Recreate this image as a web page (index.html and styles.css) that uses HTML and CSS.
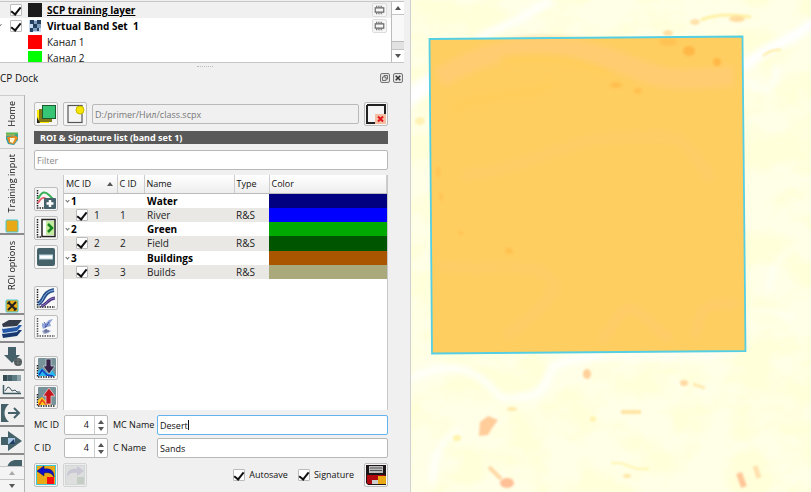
FILE: index.html
```html
<!DOCTYPE html>
<html lang="en">
<head>
<meta charset="utf-8">
<title>SCP Dock</title>
<link rel="stylesheet" href="styles.css">
</head>
<body>
<div class="app">
  <div class="side">
    <section class="layers" aria-label="Layers">
      <ul class="layer-list">
        <li class="layer layer-current">
          <span class="arrow"></span>
          <input type="checkbox" class="check" id="l1" checked>
          <svg class="sw" viewBox="0 0 14 14"><rect width="14" height="14" fill="#1b1b1b"/></svg>
          <label for="l1" class="lname bold under">SCP training layer</label>
          <button class="mem" aria-label="Memory layer"><svg viewBox="0 0 14 14"><path d="M2 4.500h10v5H2z" fill="none" stroke="#666" stroke-width="1.300"/><path d="M3.500 2v2M5.500 2v2M7.500 2v2M9.500 2v2M3.500 10v2M5.500 10v2M7.500 10v2M9.500 10v2" stroke="#666"/></svg></button>
        </li>
        <li class="layer">
          <span class="arrow"><svg viewBox="0 0 10 10"><path d="M0 5l1.500-2" stroke="#777" fill="none"/></svg></span>
          <input type="checkbox" class="check" id="l2" checked>
          <svg class="sw" viewBox="0 0 14 14"><rect x="1" y="1" width="12" height="12" fill="#c6d9ee"/><path d="M2 1h4v4H2zM9 1h4v4H9zM5 5h4v4H5zM2 9h3v4H2zM9 9h2v3H9z" fill="#24415f"/><path d="M6 2h3v3H6zM9 5h4v4H9zM5 9h4v3H5z" fill="#7f9dbd"/></svg>
          <label for="l2" class="lname bold">Virtual Band Set&nbsp; 1</label>
          <button class="mem" aria-label="Memory layer"><svg viewBox="0 0 14 14"><path d="M2 4.500h10v5H2z" fill="none" stroke="#666" stroke-width="1.300"/><path d="M3.500 2v2M5.500 2v2M7.500 2v2M9.500 2v2M3.500 10v2M5.500 10v2M7.500 10v2M9.500 10v2" stroke="#666"/></svg></button>
        </li>
        <li class="layer band"><span class="swatch red"></span><span class="lname">Канал 1</span></li>
        <li class="layer band"><span class="swatch lime"></span><span class="lname">Канал 2</span></li>
      </ul>
      <div class="scroll" aria-hidden="true"><span class="up"></span><span class="track"><span class="thumb"></span></span><span class="down"></span></div>
    </section>
    <div class="grip"></div>
    <header class="dock-title">
      <h1>CP Dock</h1>
      <button class="mini" aria-label="Float"><svg viewBox="0 0 10 10"><rect x=".5" y=".5" width="9" height="9" rx="1.500" fill="#e4e4e4" stroke="#777"/><path d="M4 4V2.500h3.500V6H6M2.500 4H6v3.500H2.500z" fill="none" stroke="#555" stroke-width=".8"/></svg></button>
      <button class="mini" aria-label="Close"><svg viewBox="0 0 10 10"><rect x=".5" y=".5" width="9" height="9" rx="1.500" fill="#e4e4e4" stroke="#777"/><path d="M2.700 2.700l4.600 4.600M7.300 2.700L2.700 7.300" stroke="#333" stroke-width="1.500"/></svg></button>
    </header>
    <div class="dock">
      <nav class="tabs">
        <button class="tab tab-home"><svg viewBox="0 0 14 14"><path d="M1 2h12v6l-4 5-6-1-2-5z" fill="#37a09c"/><path d="M2 5l9-1 2 2-4 6-5-1z" fill="#f08a1c"/><path d="M5 6l5 0-2 5-3-1z" fill="#fff4cf"/><path d="M1 1.500h12" stroke="#56bb52" stroke-width="2"/><path d="M1 3h9" stroke="#e9b53a"/></svg><span>Home</span></button>
        <button class="tab tab-training"><svg viewBox="0 0 14 14"><rect x="1" y="1" width="12" height="12" rx="1" fill="#e8a914" stroke="#41c8d8"/></svg><span>Training input</span></button>
        <button class="tab tab-roi"><svg viewBox="0 0 14 14"><rect x="1" y="1" width="12" height="12" rx="1" fill="#e8a914" stroke="#41c8d8"/><path d="M3 3l8 8M11 3l-8 8" stroke="#222" stroke-width="2"/><path d="M2.500 5L5 2.500M9 11.500L11.500 9" stroke="#222" stroke-width="1.500"/></svg><span>ROI options</span></button>
        <button class="tab tab-icon" aria-label="Band set"><svg viewBox="0 0 22 24"><path d="M1 18l7-4h13l-5 6-14 2z" fill="#16386e"/><path d="M1 14l7-4h13l-5 6-14 2z" fill="#cfe0f5"/><path d="M1 13l7-4h13l-5 6-14 2z" fill="#2458a4"/><path d="M1 9l7-4h13l-5 6-14 2z" fill="#e8edf2"/><path d="M1 8l7-4h13l-5 6-14 1z" fill="#333c48"/></svg></button>
        <button class="tab tab-icon" aria-label="Download products"><svg viewBox="0 0 22 24"><path d="M7 3h8v8h4l-8 8-8-8h4z" fill="#45626a"/><circle cx="17" cy="18" r="4" fill="#4c5557"/><path d="M13 16h8M13 19h8M17 14v8" stroke="#7d898c" stroke-width=".6"/></svg></button>
        <button class="tab tab-icon" aria-label="Basic tools"><svg viewBox="0 0 22 24"><rect x="2" y="3" width="18" height="6" fill="#5c7b83"/><path d="M2 3h4v6H2z" fill="#344a50"/><path d="M7 3h4v6H7z" fill="#466067"/><path d="M16 3h4v6h-4z" fill="#8ea4aa"/><path d="M2.500 13v8.500H20" fill="none" stroke="#3f5960" stroke-width="1.500"/><path d="M4 19l3-4 2 1 2 3 3-1 2 2h3" fill="none" stroke="#3f5960"/></svg></button>
        <button class="tab tab-icon" aria-label="Preprocessing"><svg viewBox="0 0 22 24"><path d="M0 4h8c-6 5-6 13 0 18H0z" fill="#45626a"/><path d="M7 13h11M13 8l5 5-5 5" fill="none" stroke="#45626a" stroke-width="2"/></svg></button>
        <button class="tab tab-icon" aria-label="Band processing"><svg viewBox="0 0 22 24"><path d="M0 9h7V3l14 10L7 23v-6H0z" fill="#45626a"/><path d="M7 10h7v6H7z" fill="#a8c8e6"/><path d="M8 16l5-5 1 5z" fill="#1f3d63"/></svg></button>
        <button class="tab tab-icon tab-cut" aria-label="Postprocessing"><svg viewBox="0 0 22 24"><path d="M21 4h-6c-5 0-8 3-9 8h7v9h8z" fill="#45626a"/></svg></button>
        <span class="tab-scroll"><button class="sbtn" aria-label="Scroll up"><i class="up dim"></i></button><button class="sbtn" aria-label="Scroll down"><i class="down"></i></button></span>
      </nav>
      <main class="content">
        <div class="row file-row">
          <button class="tool" aria-label="Open"><svg viewBox="0 0 20 20"><path d="M1 6h12v13H1z" fill="#ffe900"/><path d="M3 5h13v13H3z" fill="#80791a"/><path d="M1 13l3 6H1z" fill="#222"/><rect x="6.500" y="1.500" width="13" height="13" fill="#36c575" stroke="#1c5a2f"/></svg></button>
          <button class="tool" aria-label="New"><svg viewBox="0 0 20 20"><rect x="3" y="1.500" width="14" height="17" fill="#f4f4f4" stroke="#555" stroke-width="1.200"/><circle cx="15" cy="6" r="4" fill="#f6e500" stroke="#c9ba00"/></svg></button>
          <input class="field path" type="text" value="D:/primer/Нил/class.scpx" readonly aria-label="Training file">
          <button class="tool" aria-label="Reset"><svg viewBox="0 0 20 20"><path d="M1 1h18v9M1 1v18h10" fill="#f4f4f4" stroke="#222" stroke-width="2"/><path d="M2 2h16v8h-8v8H2z" fill="#f4f4f4"/><rect x="9" y="10" width="11" height="10" fill="#f3c0a4"/><path d="M12 12.500l5 5M17 12.500l-5 5" stroke="#e3161b" stroke-width="2"/></svg></button>
        </div>
        <h2 class="bar">ROI &amp; Signature list (band set 1)</h2>
        <input class="field filter" type="text" placeholder="Filter" aria-label="Filter">
        <div class="list-area">
          <div class="tools">
            <button class="tool" aria-label="Merge"><svg viewBox="0 0 20 20"><rect width="20" height="20" fill="#f5f5f5"/><path d="M1.500 1v18H18" fill="none" stroke="#222" stroke-width="1.500" stroke-dasharray="1.500 1"/><path d="M2 10c4-8 7-8 11-4l5 5" fill="none" stroke="#3bb058" stroke-width="2"/><path d="M2 14c4-7 7-6 10-2" fill="none" stroke="#ec6170" stroke-width="2"/><rect x="8" y="9" width="12" height="11" rx="1" fill="#45626a"/><path d="M14 11v7M10.500 14.500h7" stroke="#fff" stroke-width="2.500"/></svg></button>
            <button class="tool" aria-label="Import"><svg viewBox="0 0 20 20"><rect width="20" height="20" fill="#f5f5f5"/><path d="M1.500 1v18H6" fill="none" stroke="#222" stroke-width="1.500" stroke-dasharray="1.500 1"/><rect x="6" y="1.500" width="13" height="17" fill="#fff" stroke="#222" stroke-width="1.500"/><path d="M10 3h8v14h-8z" fill="#c3eaa0"/><path d="M12 6l4 4-4 4" fill="none" stroke="#16831d" stroke-width="2.500"/></svg></button>
            <button class="tool" aria-label="Delete"><svg viewBox="0 0 20 20"><rect x="1" y="1" width="18" height="18" rx="2" fill="#45626a"/><rect x="3.500" y="8" width="13" height="4" fill="#fff" stroke="#b9d4de"/></svg></button>
            <button class="tool gap" aria-label="Signature plot"><svg viewBox="0 0 20 20"><rect width="20" height="20" fill="#f8f8f8"/><path d="M1.500 1v18H19" fill="none" stroke="#222" stroke-width="1.500" stroke-dasharray="1.500 1"/><path d="M2 16C9 13 6 4 18 2" fill="none" stroke="#244e8c" stroke-width="4"/><path d="M2 16C9 13 6 4 18 2" fill="none" stroke="#8fb7de" stroke-width="1"/><path d="M5 18c6-1 6-7 14-8" fill="none" stroke="#45317e" stroke-width="3"/><path d="M5 18c6-1 6-7 14-8" fill="none" stroke="#a38bd0" stroke-width=".8"/></svg></button>
            <button class="tool" aria-label="Scatter plot"><svg viewBox="0 0 20 20"><rect width="20" height="20" fill="#f8f8f8"/><path d="M1.500 1v18H19" fill="none" stroke="#555" stroke-width="1.500" stroke-dasharray="1.500 1"/><path d="M6 6l3 1 4-4 4-1-3 4 1 3-4 1-4 2-1-3z" fill="#8fa5d8"/><path d="M8 5l2 3-1 3M13 5l-3 5" stroke="#545eb0" fill="none"/><path d="M6 14l4-2 5 2-3 2-4 1z" fill="#98a4c8"/><path d="M8 14h5M10 12v4" stroke="#5f648c"/></svg></button>
            <button class="tool gap" aria-label="Import library"><svg viewBox="0 0 20 20"><rect x="2" y="0" width="18" height="18" rx="1" fill="#78929a"/><path d="M1.500 7v12H19" fill="none" stroke="#222" stroke-width="1.500" stroke-dasharray="1.500 1"/><path d="M2 18v-5l4-3 5 5 5-3 4 6z" fill="#27b8ee"/><path d="M3 17l3-5 5 5 6 1" fill="none" stroke="#163cc0" stroke-width="1.500"/><path d="M10 1h5v7h4l-6 8-6-8h3z" fill="#38244a" stroke="#cfd8dc" stroke-width=".7"/></svg></button>
            <button class="tool" aria-label="Export library"><svg viewBox="0 0 20 20"><rect x="2" y="0" width="18" height="18" rx="1" fill="#78929a"/><path d="M1.500 7v12H19" fill="none" stroke="#222" stroke-width="1.500" stroke-dasharray="1.500 1"/><path d="M2 18v-5l4-3 5 5 4 3z" fill="#ffc51c"/><path d="M3 18l3-5 5 5" fill="none" stroke="#e4431c" stroke-width="1.500"/><path d="M10 17h5V9h4l-6-8-6 8h3z" fill="#c3151b" stroke="#f0dcdc" stroke-width=".7"/></svg></button>
          </div>
          <div class="table-box">
            <table>
              <colgroup><col class="c-mc"><col class="c-c"><col class="c-name"><col class="c-type"><col></colgroup>
              <thead><tr><th><span class="sorted">MC ID<i class="up"></i></span></th><th>C ID</th><th>Name</th><th>Type</th><th>Color</th></tr></thead>
              <tbody>
                <tr class="group"><td><span class="twist"></span>1</td><td></td><td>Water</td><td></td><td class="navy"></td></tr>
                <tr class="item"><td><span class="cell"><input type="checkbox" class="check" checked aria-label="River"> 1</span></td><td>1</td><td>River</td><td>R&amp;S</td><td class="blue"></td></tr>
                <tr class="group"><td><span class="twist"></span>2</td><td></td><td>Green</td><td></td><td class="green"></td></tr>
                <tr class="item"><td><span class="cell"><input type="checkbox" class="check" checked aria-label="Field"> 2</span></td><td>2</td><td>Field</td><td>R&amp;S</td><td class="forest"></td></tr>
                <tr class="group"><td><span class="twist"></span>3</td><td></td><td>Buildings</td><td></td><td class="brown"></td></tr>
                <tr class="item"><td><span class="cell"><input type="checkbox" class="check" checked aria-label="Builds"> 3</span></td><td>3</td><td>Builds</td><td>R&amp;S</td><td class="khaki"></td></tr>
              </tbody>
            </table>
          </div>
        </div>
        <form class="form">
          <label for="mc">MC ID</label>
          <span class="spin"><input id="mc" type="text" value="4"><span class="steps"><i class="up"></i><i class="down"></i></span></span>
          <label for="mcn">MC Name</label>
          <span class="focus-box"><input class="field focus" id="mcn" type="text" value="Desert"><span class="caret"></span></span>
          <label for="ci">C ID</label>
          <span class="spin"><input id="ci" type="text" value="4"><span class="steps"><i class="up"></i><i class="down"></i></span></span>
          <label for="cn">C Name</label>
          <input class="field" id="cn" type="text" value="Sands">
        </form>
        <div class="row foot">
          <button class="tool" aria-label="Undo"><svg viewBox="0 0 20 20"><rect x=".5" y=".5" width="19" height="19" fill="#e8a914" stroke="#41c8d8"/><path d="M1 6l7-5v3c7-1 10 2 10 8-2-4-5-5-10-4v3z" fill="#0a10c8" stroke="#101050" stroke-width=".5"/><rect x="11" y="12" width="7" height="7" fill="#fb0d0d"/></svg></button>
          <button class="tool off" aria-label="Redo" disabled><svg viewBox="0 0 20 20"><rect x=".5" y=".5" width="19" height="19" fill="#dedede" stroke="#d2d8d8"/><path d="M19 6l-7-5v3C5 3 2 6 2 12c2-4 5-5 10-4v3z" fill="#c9c7d3"/><rect x="12" y="12" width="7" height="7" fill="#c5cdc5"/></svg></button>
          <span class="opts">
            <span class="opt"><input type="checkbox" class="check" id="as" checked><label for="as">Autosave</label></span>
            <span class="opt"><input type="checkbox" class="check" id="sg" checked><label for="sg">Signature</label></span>
            <button class="tool" aria-label="Save ROI"><svg viewBox="0 0 20 20"><path d="M0 0h20v20H2l-2-2z" fill="#1c1517"/><rect x="3" y="1" width="14" height="7" fill="#bbb"/><path d="M4 3h12M4 5.500h12" stroke="#555"/><path d="M1 10h18v9H2l-1-1z" fill="#b0080d"/><path d="M6 15h6v4H6z" fill="#ccc"/><rect x="12" y="11" width="8" height="8" fill="#e8a914"/></svg></button>
          </span>
        </div>
      </main>
    </div>
  </div>
  <div class="map">
    <svg viewBox="0 0 400 492" preserveAspectRatio="xMinYMin slice" role="img" aria-label="Map canvas">
      <defs>
        <filter id="soft" x="-20%" y="-20%" width="140%" height="140%"><feGaussianBlur stdDeviation="3"/></filter>
        <filter id="spot" x="-50%" y="-50%" width="200%" height="200%"><feGaussianBlur stdDeviation="1"/></filter>
        <filter id="sand" x="0" y="0" width="100%" height="100%"><feTurbulence type="fractalNoise" baseFrequency=".022 .03" numOctaves="5" seed="8"/><feColorMatrix values="0 0 0 0 1  0 0 0 0 1  0 0 0 0 .7  3.600 0 0 0 -1.400"/></filter>
      </defs>
      <rect width="400" height="492" fill="#ffffe8"/>
      <rect width="400" height="492" filter="url(#sand)"/>
      <g filter="url(#soft)" fill="none" stroke="#fff" stroke-linecap="round">
        <path d="M-4 100l24-18" stroke-width="16"/>
        <path d="M70 36C95 26 110 18 138 2" stroke-width="7"/>
        <path d="M334 66c18-18 38-20 66-42" stroke-width="11"/>
        <path d="M334 78c8 8 16 14 28 8l4-18" stroke-width="4"/>
        <path d="M0 378c40-18 60-8 74 4s14 18 28 16 30-2 34-18 12-20 52-24" stroke-width="6"/>
        <path d="M188 358c50-4 100-2 136-4" stroke-width="6" opacity=".5"/>
        <path d="M22 480c0-26 8-40 24-48" stroke-width="5"/>
        <path d="M335 312c20-4 36-2 46 8" stroke-width="4" opacity=".7"/>
        <path d="M358 290c2-24 12-36 24-40" stroke-width="4" opacity=".7"/>
      </g>
      <g filter="url(#spot)">
        <path d="M290 20q20-8 50-3" fill="none" stroke="#fff0a4" stroke-width="3"/>
        <ellipse cx="326" cy="19" rx="8" ry="3" fill="#ffdb9e"/><ellipse cx="284" cy="22" rx="5" ry="3" fill="#ffe2aa"/>
        <path d="M352 56q8-7 18-6" fill="none" stroke="#ffeca0" stroke-width="2"/>
        <ellipse cx="257" cy="33" rx="5" ry="3" fill="#ffe0a4"/>
        <ellipse cx="9" cy="121" rx="5" ry="4" fill="#fff2b4"/>
        <ellipse cx="176" cy="374" rx="4" ry="5" fill="#ffd09a"/><ellipse cx="273" cy="383" rx="4" ry="3" fill="#ffd8a0"/><path d="M282 384l12 4" stroke="#ffeab0" stroke-width="3"/>
        <path d="M69 422l8-6 10 4-6 8-4 7-9 1z" fill="#ffcc9a"/><ellipse cx="101" cy="409" rx="5" ry="2" fill="#ffeaac"/>
        <path d="M210 412h20" stroke="#ffe4a4" stroke-width="4"/>
        <path d="M78 467l12 12" stroke="#ffd8a4" stroke-width="4"/><ellipse cx="96" cy="483" rx="7" ry="5" fill="#ffc096"/>
        <path d="M328 473l5 14" stroke="#ffc698" stroke-width="6"/><path d="M344 466l4 12" stroke="#ffe0ae" stroke-width="5"/>
        <ellipse cx="46" cy="438" rx="4" ry="3" fill="#fff3ac"/><ellipse cx="216" cy="476" rx="4" ry="2" fill="#ffe8a8"/>
        <path d="M200 463h10l16 6h12" fill="none" stroke="#fff4b0" stroke-width="2"/><ellipse cx="182" cy="419" rx="3" ry="3" fill="#fff3b0"/>
      </g>
      <path d="M18.500 39L331.500 36.500 334.500 351 21 353.500z" fill="#ffce60"/>
      <g filter="url(#soft)" fill="none">
        <path d="M28 78C60 60 90 46 140 48s74 18 100 26 50 4 82 2" stroke="#ffcc72" stroke-width="20"/>
        <path d="M90 60c50-8 80 0 110 14" stroke="#ffce58" stroke-width="6"/>
        <path d="M50 176c50-6 80-20 110-30s60-10 90-10 30 20 52 44" stroke="#ffcd66" stroke-width="12"/>
        <path d="M28 264c40 10 80-4 106 10s-10 40-40 64" stroke="#ffcd66" stroke-width="12"/>
        <path d="M190 342c16-20 20-40 34-32s20 22 36 28" stroke="#ffcc6a" stroke-width="8"/>
        <path d="M284 338c4-40 20-34 42-34" stroke="#ffcc6a" stroke-width="8"/>
        <path d="M40 110c40-20 70-10 100-26" stroke="#ffcd58" stroke-width="6"/>
      </g>
      <g filter="url(#spot)" fill="#ffb846">
        <ellipse cx="278" cy="51" rx="6" ry="5"/><ellipse cx="306" cy="62" rx="4" ry="4"/><ellipse cx="257" cy="42" rx="9" ry="4" opacity=".5"/><ellipse cx="205" cy="85" rx="6" ry="3" opacity=".6"/><ellipse cx="227" cy="91" rx="4" ry="3" opacity=".6"/><ellipse cx="98" cy="251" rx="4" ry="3" opacity=".6"/><ellipse cx="27" cy="172" rx="2" ry="5" opacity=".5"/><ellipse cx="30" cy="197" rx="2" ry="4" opacity=".4"/><ellipse cx="50" cy="233" rx="2" ry="2" opacity=".5"/>
      </g>
      <path d="M18.500 39L331.500 36.500 334.500 351 21 353.500z" fill="none" stroke="#55cfe4" stroke-width="1.800"/>
    </svg>
  </div>
</div>
</body>
</html>
```
FILE: styles.css
```css
* { box-sizing: border-box; }
body { margin: 0; font: 9px/12px "Open Sans", "Noto Sans", sans-serif; color: #111; background: #f0f0f0; }
button, input { font: inherit; color: inherit; margin: 0; padding: 0; }
button { border: 0; background: none; display: block; }
svg { display: block; }
h1, h2, ul { margin: 0; padding: 0; font-weight: normal; list-style: none; }

.app { display: grid; grid-template-columns: minmax(0, 411fr) minmax(0, 400fr); grid-template-rows: minmax(0, 1fr); height: 100vh; overflow: hidden; }
.side { display: flex; flex-direction: column; min-width: 0; min-height: 0; background: #f0f0f0; border-right: 1px solid #d0d0d0; }

.up, .down { display: block; border: 3px solid transparent; width: 0; height: 0; }
.up { border-top: 0; border-bottom: 4px solid #555; }
.down { border-bottom: 0; border-top: 4px solid #555; }
.dim { border-bottom-color: #aaa; }

.check { appearance: none; flex: none; width: 12px; height: 12px; border: 1px solid #bbb; border-radius: 1px; background: #fff; display: grid; place-items: center; }
.check:checked::before { content: ""; width: 4px; height: 8px; margin-bottom: 2px; border: solid #111; border-width: 0 2px 2px 0; transform: rotate(38deg); }

.layers { display: flex; flex: none; height: 62px; margin-top: 1px; margin-right: 6px; border: solid #c6c6c6; border-width: 1px 0; background: #fff; overflow: hidden; }
.layer-list { flex: 1; }
.layer { display: flex; align-items: center; height: 16px; font-size: 10px; line-height: 16px; padding-right: 4px; }
.layer-current { background: #f0f0f0; }
.arrow { width: 10px; }
.arrow svg { width: 10px; height: 10px; }
.sw { width: 14px; height: 14px; margin: 0 5px 0 6px; }
.band { padding-left: 28px; }
.swatch { width: 14px; height: 14px; margin-right: 5px; }
.red { background: #f00; }
.lime { background: #0f0; }
.lname { flex: 1; white-space: nowrap; }
.bold { font-weight: bold; color: #000; }
.under { text-decoration: underline; }
.mem { border: 1px solid #ddd; border-radius: 2px; background: #f6f6f6; width: 15px; height: 14px; }
.mem svg { height: 12px; width: 13px; }
.scroll { display: flex; flex-direction: column; align-items: center; width: 13px; border-left: 1px solid #bbb; padding: 4px 0; }
.track { display: flex; align-items: flex-end; flex: 1; align-self: stretch; margin: 4px 0; border: solid #c4c4c4; border-width: 1px 0; background: #f8f8f8; }
.thumb { flex: 1; height: 8px; background: #e2e2e2; border-top: 1px solid #bbb; }

.grip { flex: none; width: 16px; height: 4px; margin: 0 auto; border-bottom: 1px dotted #bbb; }
.dock-title { display: flex; flex: none; align-items: center; height: 22px; gap: 3px; padding-right: 7px; margin-bottom: 6px; }
.dock-title h1 { flex: 1; font-size: 10px; line-height: 16px; }
.mini svg { width: 10px; height: 10px; }

.dock { display: flex; flex: 1; min-height: 0; }
.tabs { display: flex; flex-direction: column; flex: none; width: 25px; border-right: 1px solid #b4b4b4; overflow: hidden; }
.tab { display: flex; flex-direction: column-reverse; align-items: center; justify-content: space-between; flex: none; width: 24px; border-bottom: 2px solid #8a8a8a; }
.tab svg { flex: none; width: 14px; height: 14px; }
.tab span { writing-mode: vertical-rl; transform: rotate(180deg); font-size: 9px; line-height: 12px; white-space: nowrap; }
.tab-home { height: 54px; border-top: 1px solid #ccc; border-bottom: 1px solid #ccc; padding: 5px 0 2px; }
.tab-training { height: 86px; padding: 5px 0 0; }
.tab-roi { height: 80px; padding: 6px 0 0; }
.tab-icon { height: 28px; }
.tab-icon svg { width: 22px; height: 24px; margin: 1px 0; }
.tab-cut { flex: 0 1 28px; min-height: 0; overflow: hidden; justify-content: flex-end; border: 0; }
.tab-scroll { flex: none; margin-top: auto; background: #f4f4f4; }
.sbtn { display: grid; place-items: center; width: 24px; height: 13px; border-top: 1px solid #c6c6c6; }

.content { flex: 1; min-width: 0; display: flex; flex-direction: column; padding: 7px 22px 5px 9px; }
.row { display: flex; align-items: center; gap: 5px; flex: none; }
.tool { flex: none; width: 24px; height: 24px; padding: 1px; border: 1px solid #bdbdbd; border-radius: 2px; background: #f6f6f6; }
.tool svg { width: 20px; height: 20px; }
.off { border-color: #d4d4d4; background: #eee; }
.field { width: 100%; height: 20px; border: 1px solid #b9b9b9; border-radius: 2px; background: #fff; padding: 0 2px; outline: 0; }
.path { flex: 1; min-width: 0; background: #f0f0f0; color: #777; }
.bar { flex: none; height: 13px; margin-top: 5px; padding-left: 6px; background: #595959; color: #fff; font: bold 9px/13px "Noto Sans", sans-serif; }
.filter { flex: none; margin-top: 6px; }
.filter::placeholder { color: #888; opacity: 1; }

.list-area { display: flex; flex: 1; gap: 5px; min-height: 0; margin-top: 5px; }
.tools { display: flex; flex-direction: column; gap: 5px; padding-top: 12px; flex: none; }
.gap { margin-top: 12px; }
.table-box { flex: 1; min-width: 0; background: #fff; border: solid #c8c8c8; border-width: 0 1px; }
table { width: 100%; height: 104px; table-layout: fixed; border-collapse: collapse; }
.c-mc { width: 53px; }
.c-c { width: 27px; }
.c-name { width: 90px; }
.c-type { width: 35px; }
th { height: 18px; padding: 0 2px; text-align: left; font-weight: normal; background: linear-gradient(#fff, #ededed); border-right: 1px solid #ccc; border-bottom: 1px solid #bbb; white-space: nowrap; }
.sorted { display: flex; align-items: center; justify-content: space-between; padding-right: 2px; }
td { padding: 0 2px; font-size: 10px; line-height: 12px; white-space: nowrap; }
td:nth-child(3) { padding-left: 3px; }
.group { font-weight: bold; color: #000; }
.item { background: #e9e8e4; color: #222; }
.item td:nth-child(2) { padding-left: 3px; }
.cell { display: flex; align-items: center; gap: 6px; padding-left: 10px; }
.twist { display: inline-block; width: 3px; height: 3px; margin: 0 2px 3px 0; border: solid #666; border-width: 0 1px 1px 0; transform: rotate(45deg); }
.navy { background: #000080; }
.blue { background: #0000ff; }
.green { background: #00aa00; }
.forest { background: #005500; }
.brown { background: #aa5500; }
.khaki { background: #a9a97c; }

.form { display: grid; flex: none; grid-template-columns: 30px 44px 49px minmax(0, 1fr); align-items: center; row-gap: 3px; margin-top: 5px; }
.form label:nth-of-type(even) { padding-left: 5px; }
.spin { display: flex; height: 20px; border: 1px solid #b9b9b9; border-radius: 2px; background: #fff; }
.spin input { flex: 1; min-width: 0; border: 0; background: none; text-align: right; padding-right: 5px; outline: 0; }
.steps { display: flex; flex-direction: column; justify-content: center; gap: 3px; width: 13px; padding-left: 3px; border-left: 1px solid #ccc; }
.focus-box { position: relative; display: block; }
.focus { border-color: #62b3ee; }
.caret { position: absolute; left: 31px; top: 5px; width: 1px; height: 10px; background: #111; }
.foot { margin-top: 5px; }
.opts { display: flex; align-items: center; gap: 10px; margin-left: auto; }
.opt { display: flex; align-items: center; gap: 4px; }

.map { min-width: 0; min-height: 0; overflow: hidden; background: #ffffe2; }
.map svg { width: 100%; height: 100%; }
```
